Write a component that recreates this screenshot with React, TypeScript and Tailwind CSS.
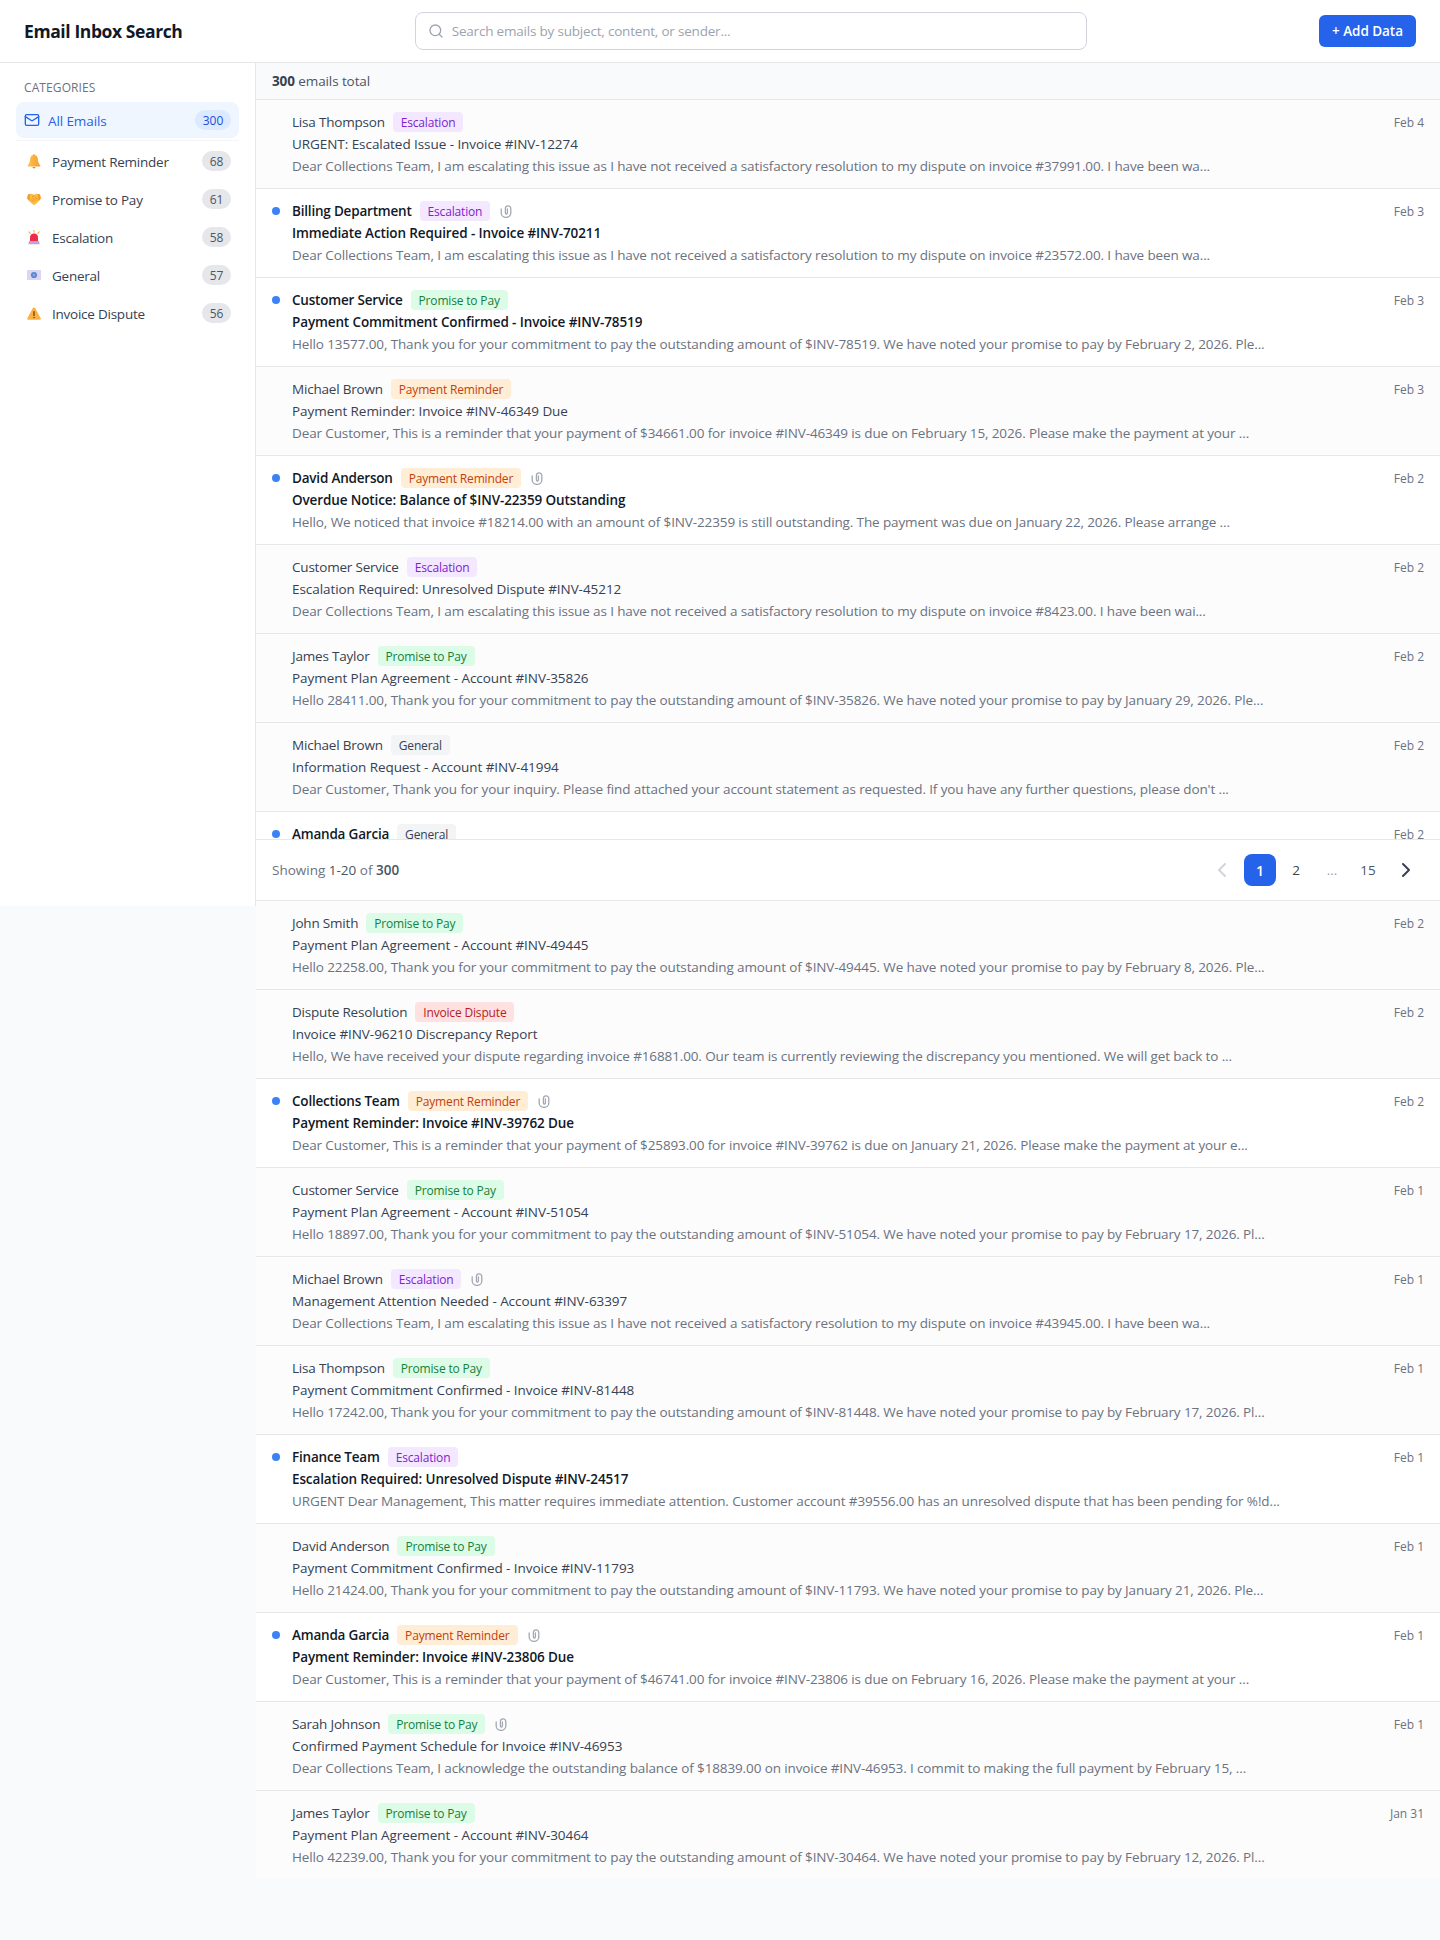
import React from "react";
import { ChevronLeft, ChevronRight, Mail, Search } from "lucide-react";

type Cat = "Escalation" | "Promise to Pay" | "Payment Reminder" | "General" | "Invoice Dispute";
type Row = { n: string; c: Cat; s: string; p: string; d: string; u?: boolean; a?: boolean };

const badge: Record<Cat, string> = {
  Escalation: "bg-[#f3e8ff] text-[#7e22ce]",
  "Promise to Pay": "bg-[#dcfce7] text-[#15803d]",
  "Payment Reminder": "bg-[#ffedd5] text-[#c2410c]",
  General: "bg-[#f3f4f6] text-[#374151]",
  "Invoice Dispute": "bg-[#fee2e2] text-[#b91c1c]",
};

const rows: Row[] = [
  { n: "Lisa Thompson", c: "Escalation", s: "URGENT: Escalated Issue - Invoice #INV-12274", p: "Dear Collections Team, I am escalating this issue as I have not received a satisfactory resolution to my dispute on invoice #37991.00. I have been wa...", d: "Feb 4" },
  { n: "Billing Department", c: "Escalation", s: "Immediate Action Required - Invoice #INV-70211", p: "Dear Collections Team, I am escalating this issue as I have not received a satisfactory resolution to my dispute on invoice #23572.00. I have been wa...", d: "Feb 3", u: true, a: true },
  { n: "Customer Service", c: "Promise to Pay", s: "Payment Commitment Confirmed - Invoice #INV-78519", p: "Hello 13577.00, Thank you for your commitment to pay the outstanding amount of $INV-78519. We have noted your promise to pay by February 2, 2026. Ple...", d: "Feb 3", u: true },
  { n: "Michael Brown", c: "Payment Reminder", s: "Payment Reminder: Invoice #INV-46349 Due", p: "Dear Customer, This is a reminder that your payment of $34661.00 for invoice #INV-46349 is due on February 15, 2026. Please make the payment at your ...", d: "Feb 3" },
  { n: "David Anderson", c: "Payment Reminder", s: "Overdue Notice: Balance of $INV-22359 Outstanding", p: "Hello, We noticed that invoice #18214.00 with an amount of $INV-22359 is still outstanding. The payment was due on January 22, 2026. Please arrange ...", d: "Feb 2", u: true, a: true },
  { n: "Customer Service", c: "Escalation", s: "Escalation Required: Unresolved Dispute #INV-45212", p: "Dear Collections Team, I am escalating this issue as I have not received a satisfactory resolution to my dispute on invoice #8423.00. I have been wai...", d: "Feb 2" },
  { n: "James Taylor", c: "Promise to Pay", s: "Payment Plan Agreement - Account #INV-35826", p: "Hello 28411.00, Thank you for your commitment to pay the outstanding amount of $INV-35826. We have noted your promise to pay by January 29, 2026. Ple...", d: "Feb 2" },
  { n: "Michael Brown", c: "General", s: "Information Request - Account #INV-41994", p: "Dear Customer, Thank you for your inquiry. Please find attached your account statement as requested. If you have any further questions, please don't ...", d: "Feb 2" },
  { n: "Amanda Garcia", c: "General", s: "", p: "", d: "Feb 2", u: true },
  { n: "John Smith", c: "Promise to Pay", s: "Payment Plan Agreement - Account #INV-49445", p: "Hello 22258.00, Thank you for your commitment to pay the outstanding amount of $INV-49445. We have noted your promise to pay by February 8, 2026. Ple...", d: "Feb 2" },
  { n: "Dispute Resolution", c: "Invoice Dispute", s: "Invoice #INV-96210 Discrepancy Report", p: "Hello, We have received your dispute regarding invoice #16881.00. Our team is currently reviewing the discrepancy you mentioned. We will get back to ...", d: "Feb 2" },
  { n: "Collections Team", c: "Payment Reminder", s: "Payment Reminder: Invoice #INV-39762 Due", p: "Dear Customer, This is a reminder that your payment of $25893.00 for invoice #INV-39762 is due on January 21, 2026. Please make the payment at your e...", d: "Feb 2", u: true, a: true },
  { n: "Customer Service", c: "Promise to Pay", s: "Payment Plan Agreement - Account #INV-51054", p: "Hello 18897.00, Thank you for your commitment to pay the outstanding amount of $INV-51054. We have noted your promise to pay by February 17, 2026. Pl...", d: "Feb 1" },
  { n: "Michael Brown", c: "Escalation", s: "Management Attention Needed - Account #INV-63397", p: "Dear Collections Team, I am escalating this issue as I have not received a satisfactory resolution to my dispute on invoice #43945.00. I have been wa...", d: "Feb 1", a: true },
  { n: "Lisa Thompson", c: "Promise to Pay", s: "Payment Commitment Confirmed - Invoice #INV-81448", p: "Hello 17242.00, Thank you for your commitment to pay the outstanding amount of $INV-81448. We have noted your promise to pay by February 17, 2026. Pl...", d: "Feb 1" },
  { n: "Finance Team", c: "Escalation", s: "Escalation Required: Unresolved Dispute #INV-24517", p: "URGENT Dear Management, This matter requires immediate attention. Customer account #39556.00 has an unresolved dispute that has been pending for %!d...", d: "Feb 1", u: true },
  { n: "David Anderson", c: "Promise to Pay", s: "Payment Commitment Confirmed - Invoice #INV-11793", p: "Hello 21424.00, Thank you for your commitment to pay the outstanding amount of $INV-11793. We have noted your promise to pay by January 21, 2026. Ple...", d: "Feb 1" },
  { n: "Amanda Garcia", c: "Payment Reminder", s: "Payment Reminder: Invoice #INV-23806 Due", p: "Dear Customer, This is a reminder that your payment of $46741.00 for invoice #INV-23806 is due on February 16, 2026. Please make the payment at your ...", d: "Feb 1", u: true, a: true },
  { n: "Sarah Johnson", c: "Promise to Pay", s: "Confirmed Payment Schedule for Invoice #INV-46953", p: "Dear Collections Team, I acknowledge the outstanding balance of $18839.00 on invoice #INV-46953. I commit to making the full payment by February 15, ...", d: "Feb 1", a: true },
  { n: "James Taylor", c: "Promise to Pay", s: "Payment Plan Agreement - Account #INV-30464", p: "Hello 42239.00, Thank you for your commitment to pay the outstanding amount of $INV-30464. We have noted your promise to pay by February 12, 2026. Pl...", d: "Jan 31" },
];

const Bell = () => (
  <svg viewBox="0 0 14 15" className="h-[15px] w-[14px]">
    <defs>
      <linearGradient id="bg" x1="0" x2="1" y1="0" y2="0">
        <stop offset="0" stopColor="#fcc24f" />
        <stop offset="1" stopColor="#f59e2e" />
      </linearGradient>
    </defs>
    <circle cx="7" cy="1.4" r="1.1" fill="#f59e2e" />
    <path d="M7 1c-2.6 0-3.9 2-3.9 4.6 0 2.6-1 4.200-2.400 5.900-.3.4 0 .9.5.9h11.600c.5 0 .8-.5.5-.9-1.400-1.700-2.400-3.300-2.400-5.900C10.900 3 9.600 1 7 1z" fill="url(#bg)" />
    <path d="M5.400 13h3.200a1.600 1.500 0 0 1-3.200 0z" fill="#e9872a" />
  </svg>
);
const Shake = () => (
  <svg viewBox="0 0 14 12" className="h-[12px] w-[14px]">
    <path d="M1 1.500 4.500.800 7 1.800 9.500.800 13 1.500 13.800 5.500 12 8 8.500 11.300C7.600 12 6.500 12 5.600 11.200L2 8 .2 5.500z" fill="#fbbc3f" />
    <path d="M.2 5.500 1 1.500 3.200 1 2.400 7.800zM13.800 5.500 13 1.500 10.800 1 11.600 7.800z" fill="#f39a2c" />
    <path d="M4 6.500 6.500 9M5.500 5 8.300 7.800M5 3.500 7.300 2.800M8 4 10.500 6.500" stroke="#e98a22" strokeWidth=".9" fill="none" />
  </svg>
);
const Siren = () => (
  <svg viewBox="0 0 14 15" className="h-[15px] w-[14px]">
    <path d="M7 0v2.200M1.800 1.800l1.500 1.600M12.200 1.800l-1.500 1.600" stroke="#f7b23b" strokeWidth="1.100" strokeLinecap="round" />
    <path d="M3 11V7.500C3 5 4.800 3.500 7 3.500S11 5 11 7.500V11z" fill="#ee2b4a" />
    <path d="M2 11h10l.7 3.300H1.300z" fill="#bfa1dc" />
  </svg>
);
const Envelope = () => (
  <svg viewBox="0 0 14 10" className="h-[10px] w-[14px]">
    <rect x="0" y="0" width="14" height="10" fill="#dcd6f2" />
    <circle cx="7" cy="5" r="3.100" fill="#5e86d6" />
    <circle cx="7" cy="5" r="1.300" fill="#8ca6e2" />
  </svg>
);
const Warn = () => (
  <svg viewBox="0 0 14 13" className="h-[13px] w-[14px]">
    <path d="M7 .500c.5 0 .9.300 1.200.8l5.500 10c.4.800-.1 1.500-.9 1.500H1.200c-.8 0-1.300-.7-.9-1.500l5.500-10C6.100.800 6.500.500 7 .500z" fill="#fbb142" />
    <rect x="6.400" y="4.200" width="1.200" height="4.800" fill="#5b3b1c" />
    <rect x="6.400" y="9.900" width="1.200" height="1.300" fill="#5b3b1c" />
  </svg>
);
const Clip = () => (
  <svg viewBox="0 0 12 13" className="ml-[2px] h-[13px] w-[12px]" fill="none" stroke="#a3a8b2" strokeWidth="1.300">
    <path d="M1.200 4v4a4.800 4.400 0 0 0 9.600 0V3.500a2.700 2.700 0 0 0-5.400 0V8a1 1 0 0 0 2 0V4" strokeLinecap="round" />
  </svg>
);

const cats: [string, React.ReactNode, number][] = [
  ["Payment Reminder", <Bell />, 68],
  ["Promise to Pay", <Shake />, 61],
  ["Escalation", <Siren />, 58],
  ["General", <Envelope />, 57],
  ["Invoice Dispute", <Warn />, 56],
];

function EmailRow({ r }: { r: Row }) {
  return (
    <div className={`flex h-[89px] border-b border-[#e5e7eb] px-4 pt-3 last:h-[88px] last:border-b-0 ${r.u ? "bg-white" : "bg-[#fcfcfd]"}`}>
      <div className="flex h-5 w-5 shrink-0 items-center">
        {r.u && <span className="h-2 w-2 rounded-full bg-[#3b82f6]" />}
      </div>
      <div className="min-w-0 flex-1">
        <div className="flex h-5 items-center gap-2">
          <span className={`text-[13.5px] tracking-[-0.2px] ${r.u ? "font-semibold text-[#111827]" : "text-[#374151]"}`}>{r.n}</span>
          <span className={`flex h-5 items-center rounded px-2 pt-[2px] text-[12px] font-medium tracking-[-0.17px] ${badge[r.c]}`}>{r.c}</span>
          {r.a && <Clip />}
        </div>
        <div className={`mt-[2px] flex h-5 items-center text-[13.5px] ${r.u ? "font-semibold tracking-[-0.12px] text-[#111827]" : "tracking-[-0.06px] text-[#374151]"}`}>{r.s}</div>
        <div className="mt-[2px] flex h-5 items-center pt-[1px] text-[13.5px] tracking-[-0.12px] whitespace-nowrap text-[#6b7280]">{r.p}</div>
      </div>
      <div className="flex h-5 items-center self-start pt-[2px] text-[12px] text-[#6b7280]">{r.d}</div>
    </div>
  );
}

export default function App() {
  return (
    <div className="min-h-screen bg-[#f9fafb] font-['Open_Sans',sans-serif]">
      <header className="flex h-[63px] items-center border-b border-[#e5e7eb] bg-white px-6">
        <h1 className="text-[17.5px] font-bold tracking-[-0.4px] whitespace-nowrap text-[#111827]">Email Inbox Search</h1>
        <div className="mx-auto flex h-[38px] w-full max-w-2xl items-center gap-[8px] rounded-lg border border-[#d1d5db] bg-white px-3">
          <Search size={16} className="text-[#9ca3af]" strokeWidth={2} />
          <span className="text-[13.5px] tracking-[-0.2px] text-[#9ca3af]">Search emails by subject, content, or sender...</span>
        </div>
        <button className="flex h-8 w-[97px] shrink-0 items-center justify-center rounded-md bg-[#2563eb] text-[13.5px] font-semibold tracking-[-0.05px] text-white">+ Add Data</button>
      </header>
      <div className="flex items-start">
        <aside className="h-[843px] w-64 shrink-0 border-r border-[#e5e7eb] bg-white px-4 pt-4">
          <div className="mb-[7px] flex h-4 items-center px-2 pt-[2px] text-[12px] font-medium tracking-[0.1px] text-[#6b7280]">CATEGORIES</div>
          <div className="flex h-9 items-center gap-2 rounded-lg bg-[#eff6ff] px-2">
            <Mail size={16} className="text-[#2563eb]" strokeWidth={2} />
            <span className="flex-1 pt-[2px] text-[13.5px] font-medium tracking-[-0.1px] text-[#2563eb]">All Emails</span>
            <span className="flex h-5 w-9 items-center justify-center rounded-full bg-[#dbeafe] pt-[1px] text-[12px] text-[#1d4ed8]">300</span>
          </div>
          <div className="my-[2px] h-px bg-[#f3f4f6]" />
          <div className="flex flex-col gap-[2px]">
            {cats.map(([l, ic, c]) => (
              <div key={l} className="flex h-9 items-center gap-2 px-2">
                <span className="flex w-5 justify-center">{ic}</span>
                <span className="flex-1 pt-[2px] text-[13.5px] tracking-[-0.24px] text-[#374151]">{l}</span>
                <span className="flex h-5 w-[29px] items-center justify-center rounded-full bg-[#e5e7eb] pt-[1px] text-[12px] text-[#4b5563]">{c}</span>
              </div>
            ))}
          </div>
        </aside>
        <main className="flex h-[838px] min-w-0 flex-1 flex-col">
          <div className="flex h-[37px] shrink-0 items-center border-b border-[#e5e7eb] bg-[#f9fafb] px-4 pt-[1px] text-[13.5px] tracking-[-0.1px] text-[#4b5563]">
            <span className="font-bold text-[#374151]">300</span>&nbsp;emails total
          </div>
          <div className="min-h-0 flex-1">
            {rows.map((r, i) => (
              <EmailRow key={i} r={r} />
            ))}
          </div>
          <div className="relative z-10 flex h-[62px] shrink-0 items-center justify-between border-y border-[#e5e7eb] bg-white px-4">
            <span className="text-[13.5px] text-[#6b7280]">
              Showing <span className="font-medium text-[#4b5563]">1-20</span> of <span className="font-semibold text-[#4b5563]">300</span>
            </span>
            <div className="flex items-center gap-1">
              <span className="flex h-8 w-9 items-center justify-center text-[#d1d5db]"><ChevronLeft size={24} strokeWidth={2} /></span>
              <span className="flex h-8 w-8 items-center justify-center rounded-lg bg-[#2563eb] text-[14px] font-semibold text-white">1</span>
              <span className="flex h-8 w-8 items-center justify-center text-[13.5px] text-[#374151]">2</span>
              <span className="flex h-8 w-8 items-center justify-center text-[13.5px] text-[#9ca3af]">...</span>
              <span className="flex h-8 w-8 items-center justify-center text-[13.5px] text-[#4b5563]">15</span>
              <span className="flex h-8 w-9 items-center justify-center text-[#374151]"><ChevronRight size={24} strokeWidth={2} /></span>
            </div>
          </div>
        </main>
      </div>
    </div>
  );
}
